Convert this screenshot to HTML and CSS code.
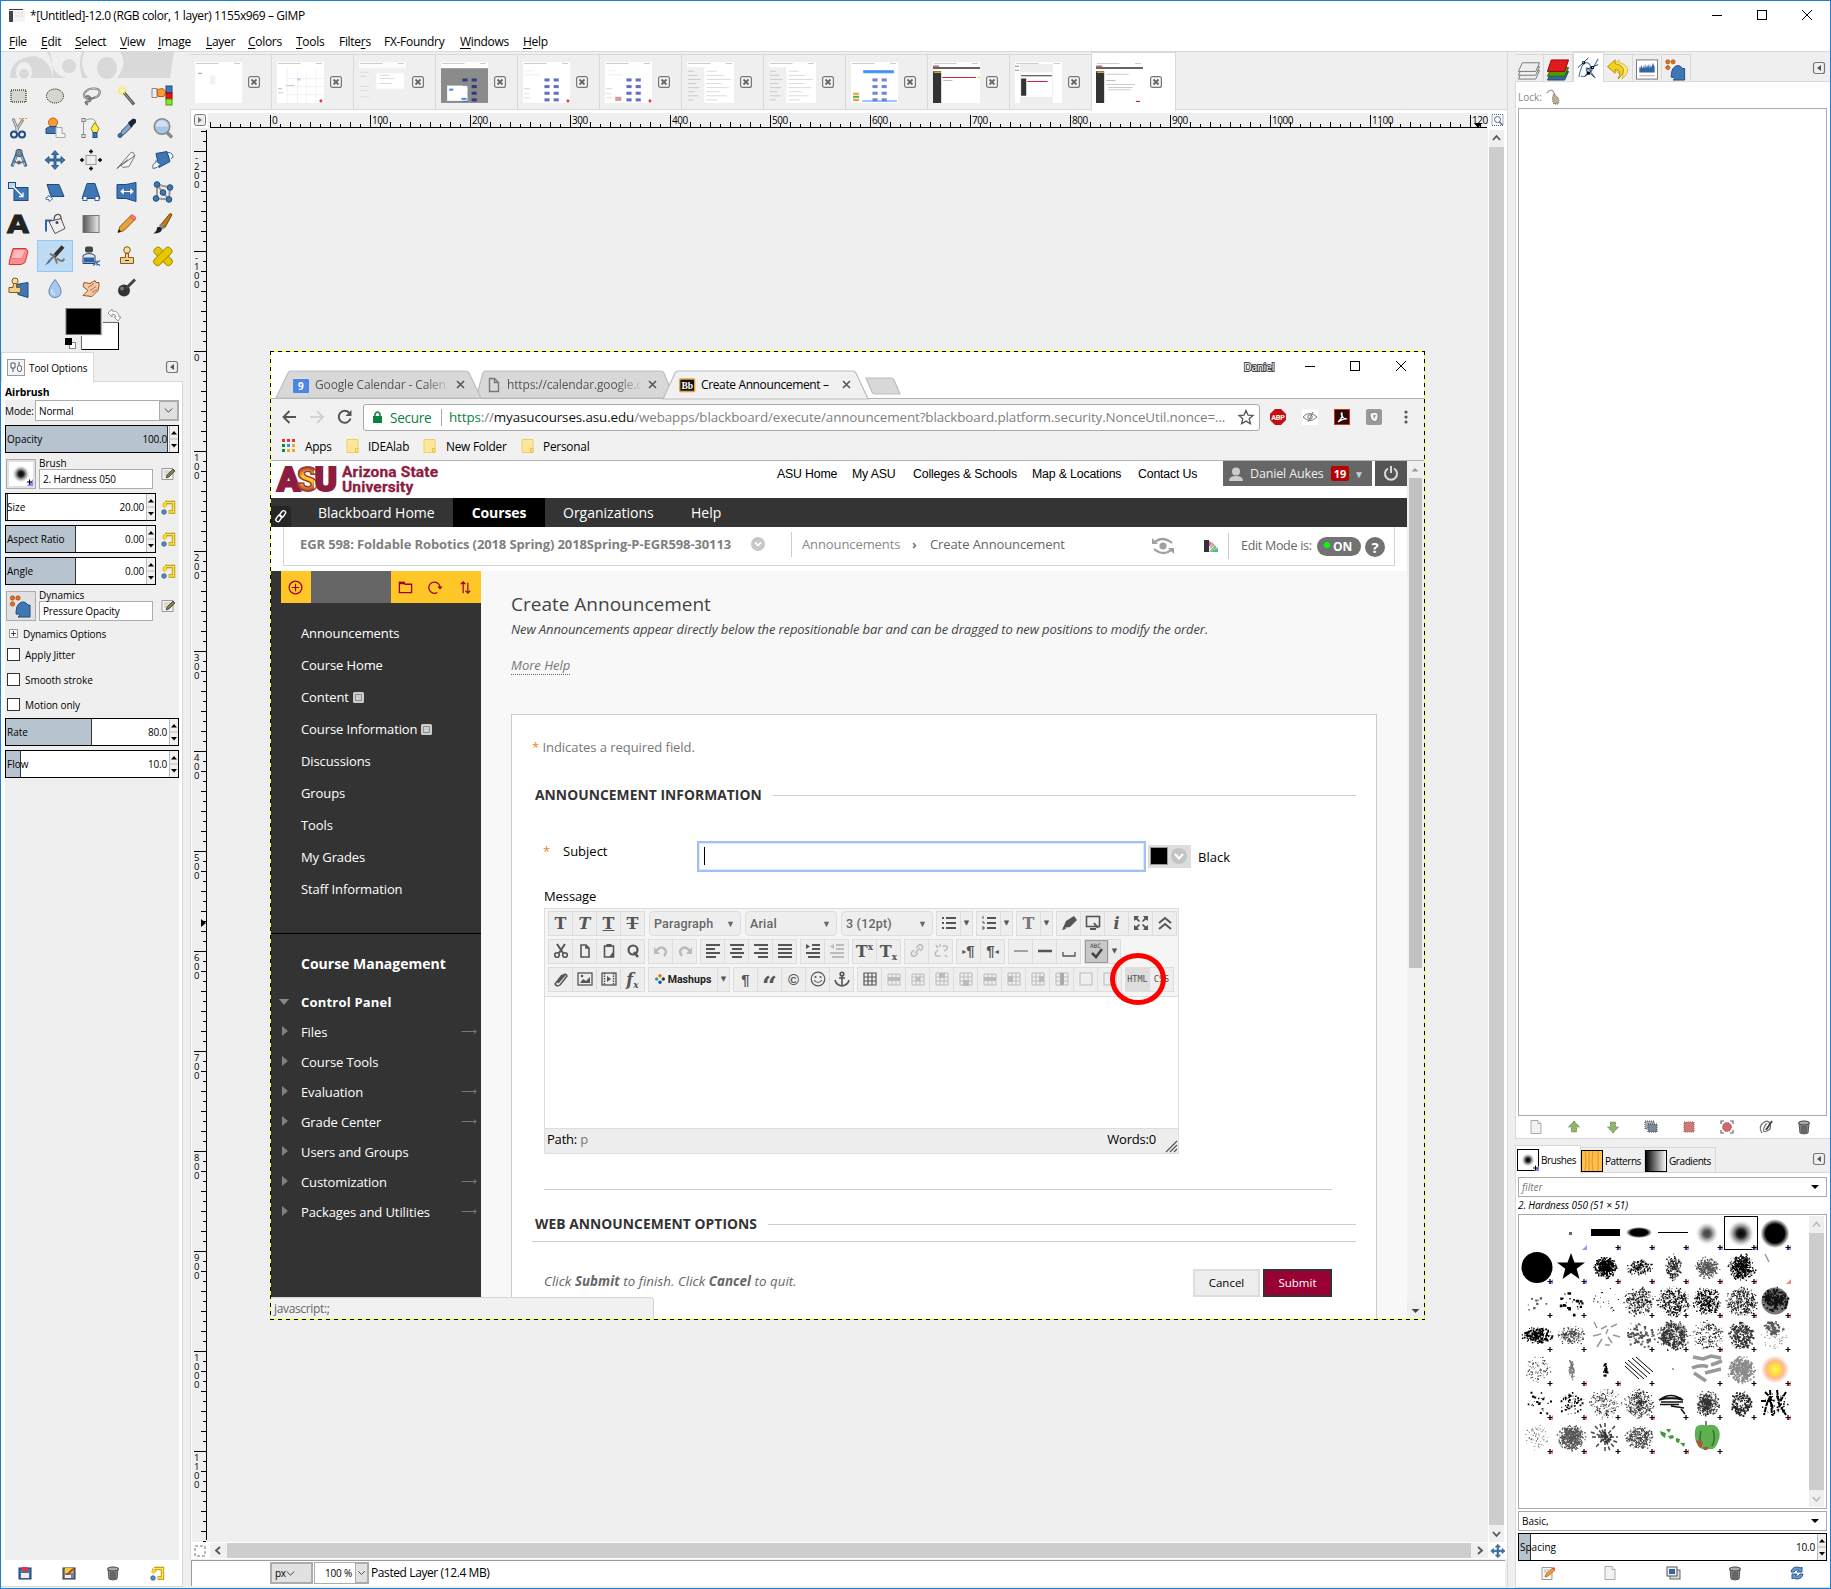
FILE: index.html
```html
<!DOCTYPE html>
<html lang="en">
<head>
<meta charset="utf-8">
<title>*[Untitled]-12.0 (RGB color, 1 layer) 1155x969 – GIMP</title>
<link rel="stylesheet" href="styles.css">
</head>
<body>
<div class="window">
  <header class="titlebar">
    <i data-icon="appthumb" class="app-icon"></i>
    <span class="title">*[Untitled]-12.0 (RGB color, 1 layer) 1155x969 – GIMP</span>
    <i data-icon="winbtns" class="win-buttons"></i>
  </header>
  <nav class="menubar">
    <span><u>F</u>ile</span><span><u>E</u>dit</span><span><u>S</u>elect</span><span><u>V</u>iew</span><span><u>I</u>mage</span><span><u>L</u>ayer</span><span><u>C</u>olors</span><span><u>T</u>ools</span><span>Filte<u>r</u>s</span><span>FX-Foundry</span><span><u>W</u>indows</span><span><u>H</u>elp</span>
  </nav>
  <div class="workspace">
    <aside class="toolbox">
      <i data-icon="wilber" class="wilber"></i>
      <div class="tools">
        <i data-icon="rectsel"></i><i data-icon="ellsel"></i><i data-icon="lasso"></i><i data-icon="wand"></i><i data-icon="bycolor"></i>
        <i data-icon="scissors"></i><i data-icon="foreground"></i><i data-icon="paths"></i><i data-icon="picker"></i><i data-icon="zoom"></i>
        <i data-icon="measure"></i><i data-icon="move"></i><i data-icon="align"></i><i data-icon="crop"></i><i data-icon="rotate"></i>
        <i data-icon="scale"></i><i data-icon="shear"></i><i data-icon="perspective"></i><i data-icon="flip"></i><i data-icon="cage"></i>
        <i data-icon="text"></i><i data-icon="bucket"></i><i data-icon="blend"></i><i data-icon="pencil"></i><i data-icon="brush"></i>
        <i data-icon="eraser"></i><i data-icon="airbrush" class="on"></i><i data-icon="ink"></i><i data-icon="stamp"></i><i data-icon="heal"></i>
        <i data-icon="pclone"></i><i data-icon="blur"></i><i data-icon="smudge"></i><i data-icon="dodge"></i>
      </div>
      <i data-icon="colors" class="colors"></i>
      <div class="opt-tabs"><div class="opt-tab"><i data-icon="toolopt" class="i18"></i><span>Tool Options</span></div><i data-icon="menubtn" class="i12"></i></div>
      <div class="opt-panel">
        <b class="tool-name">Airbrush</b>
        <div class="opt-body">
          <div class="mode"><span>Mode:</span><div class="combo"><span>Normal</span><i data-icon="chev" class="combo-arrow"></i></div></div>
          <div class="slider"><div class="fill" style="width:94%"></div><span>Opacity</span><b>100.0</b><i data-icon="spin" class="spin"></i></div>
          <div class="resource"><i data-icon="softbtn" class="res-btn"></i><div><span>Brush</span><div class="entry">2. Hardness 050</div></div><i data-icon="edit" class="i16"></i></div>
          <div class="reset-row"><div class="slider"><div class="fill" style="width:1.3%"></div><span>Size</span><b>20.00</b><i data-icon="spin" class="spin"></i></div><i data-icon="reset" class="i16"></i></div>
          <div class="reset-row"><div class="slider"><div class="fill" style="width:47%"></div><span>Aspect Ratio</span><b>0.00</b><i data-icon="spin" class="spin"></i></div><i data-icon="reset" class="i16"></i></div>
          <div class="reset-row"><div class="slider"><div class="fill" style="width:47%"></div><span>Angle</span><b>0.00</b><i data-icon="spin" class="spin"></i></div><i data-icon="reset" class="i16"></i></div>
          <div class="resource"><i data-icon="dynbtn" class="res-btn"></i><div><span>Dynamics</span><div class="entry">Pressure Opacity</div></div><i data-icon="edit" class="i16"></i></div>
          <div class="expander"><i data-icon="plusbox" class="i9"></i><span>Dynamics Options</span></div>
          <label class="check"><i></i>Apply Jitter</label>
          <label class="check"><i></i>Smooth stroke</label>
          <label class="check"><i></i>Motion only</label>
          <div class="slider"><div class="fill" style="width:50%"></div><span>Rate</span><b>80.0</b><i data-icon="spin" class="spin"></i></div>
          <div class="slider"><div class="fill" style="width:9%"></div><span>Flow</span><b>10.0</b><i data-icon="spin" class="spin"></i></div>
        </div>
        <div class="opt-foot"><i data-icon="save"></i><i data-icon="load"></i><i data-icon="trash"></i><i data-icon="reset"></i></div>
      </div>
    </aside>

    <main class="center">
      <div class="img-tabs" id="imgTabs"></div>
      <div class="img-view">
        <i data-icon="playbtn" class="corner"></i>
        <div class="hruler" id="hruler"></div>
        <i data-icon="zoomfit" class="corner"></i>
        <div class="vruler" id="vruler"></div>
        <div class="canvas">
          <div class="layer">
            <div class="strip">
              <i data-icon="tabshapes" class="tabshapes"></i>
              <i data-icon="gcal" class="i16"></i><span class="fade">Google Calendar - Calen</span><i data-icon="x" class="i9"></i>
              <i data-icon="page" class="i16"></i><span class="fade">https://calendar.google.c</span><i data-icon="x" class="i9"></i>
              <i data-icon="bb" class="i16"></i><span class="tab-title">Create Announcement –</span><i data-icon="x" class="i9"></i>
              <span class="profile">Daniel</span><i data-icon="chromebtns" class="chromebtns"></i>
            </div>
            <div class="chrome">
              <div class="addr">
                <i data-icon="back" class="i16"></i><i data-icon="fwd" class="i16"></i><i data-icon="reload" class="i16"></i>
                <div class="url"><i data-icon="lock" class="lock"></i><span class="secure">Secure</span><span class="address"><em>https</em>://<b>myasucourses.asu.edu</b>/webapps/blackboard/execute/announcement?blackboard.platform.security.NonceUtil.nonce=...</span><i data-icon="star" class="i16"></i></div>
                <i data-icon="abp" class="i16"></i><i data-icon="eye" class="i16"></i><i data-icon="pdf" class="i16"></i><i data-icon="shield" class="i16"></i><i data-icon="dots" class="i16"></i>
              </div>
              <div class="marks"><i data-icon="apps" class="i14"></i><span>Apps</span><i data-icon="folder" class="i14"></i><span>IDEAlab</span><i data-icon="folder" class="i14"></i><span>New Folder</span><i data-icon="folder" class="i14"></i><span>Personal</span></div>
            </div>
            <div class="site-wrap">
              <div class="site">
                <div class="asu">
                  <div class="logo"><span class="mark">A<em>S</em>U</span><span class="name">Arizona State<br>University</span></div>
                  <span>ASU Home</span><span>My ASU</span><span>Colleges &amp; Schools</span><span>Map &amp; Locations</span><span>Contact Us</span>
                  <div class="user"><i data-icon="person" class="i14"></i><span>Daniel Aukes</span><b>19</b><small>▼</small></div>
                  <div class="power"><i data-icon="power" class="i16"></i></div>
                </div>
                <div class="topnav"><div class="link"><i data-icon="link" class="i14"></i></div><span>Blackboard Home</span><b>Courses</b><span>Organizations</span><span>Help</span></div>
                <div class="crumbs">
                  <b>EGR 598: Foldable Robotics (2018 Spring) 2018Spring-P-EGR598-30113</b><i data-icon="down" class="i14"></i>
                  <span class="c1">Announcements</span><span class="sep">›</span><span class="c2">Create Announcement</span>
                  <i data-icon="preview" class="preview"></i><i data-icon="theme" class="i16"></i><span class="em">Edit Mode is:</span><span class="pill">ON</span><span class="help">?</span>
                </div>
                <div class="cols">
                  <div class="side">
                    <div class="side-head"><i data-icon="plus"></i><i data-icon="fold"></i><i data-icon="refresh"></i><i data-icon="updown"></i></div>
                    <ul class="course">
                      <li>Announcements</li><li>Course Home</li><li>Content <i data-icon="dotbox" class="i11"></i></li><li>Course Information <i data-icon="dotbox" class="i11"></i></li><li>Discussions</li><li>Groups</li><li>Tools</li><li>My Grades</li><li>Staff Information</li>
                    </ul>
                    <h3>Course Management</h3>
                    <h4>Control Panel</h4>
                    <ul class="control">
                      <li class="go">Files</li><li>Course Tools</li><li class="go">Evaluation</li><li class="go">Grade Center</li><li>Users and Groups</li><li class="go">Customization</li><li class="go">Packages and Utilities</li>
                    </ul>
                  </div>
                  <div class="content">
                    <h1>Create Announcement</h1>
                    <p class="intro">New Announcements appear directly below the repositionable bar and can be dragged to new positions to modify the order.</p>
                    <p class="more"><span>More Help</span></p>
                    <div class="card">
                      <p class="req"><em>*</em> Indicates a required field.</p>
                      <h2 class="h2">ANNOUNCEMENT INFORMATION</h2>
                      <div class="subject"><em>*</em><span>Subject</span><div class="field"></div><i data-icon="swatch" class="swatch"></i><span>Black</span></div>
                      <p class="msg">Message</p>
                      <div class="editor">
                        <div class="bars" id="bars"></div>
                        <div class="area"></div>
                        <div class="path"><span>Path: <em>p</em></span><span class="words">Words:0</span><i data-icon="grip" class="i14"></i></div>
                        <div class="ring"></div>
                      </div>
                      <div class="rule"></div>
                      <h2 class="h2 second">WEB ANNOUNCEMENT OPTIONS</h2>
                      <div class="rule2"></div>
                      <div class="actions"><p>Click <b>Submit</b> to finish. Click <b>Cancel</b> to quit.</p><span class="btn">Cancel</span><span class="btn primary">Submit</span></div>
                    </div>
                  </div>
                </div>
                <div class="statustip">javascript:;</div>
              </div>
              <div class="wsb"><i data-icon="sbup"></i><div class="thumb"></div><i data-icon="sbdown"></i></div>
            </div>
          </div>
        </div>
        <div class="vsb"><i data-icon="aup"></i><div class="thumb"></div><i data-icon="adown"></i></div>
        <i data-icon="quick" class="corner"></i>
        <div class="hsb"><i data-icon="aleft"></i><div class="thumb"></div><i data-icon="aright"></i></div>
        <i data-icon="nav" class="corner nav"></i>
      </div>
      <div class="status"><div class="unit">px<i data-icon="chev" class="i9"></i></div><div class="zoomlvl"><span>100 %</span><i data-icon="chev"></i></div><span>Pasted Layer (12.4 MB)</span></div>
    </main>

    <aside class="docks">
      <div class="dock-tabs">
        <i data-icon="layers"></i><i data-icon="channels"></i><i data-icon="pathsdock" class="on"></i><i data-icon="undodock"></i><i data-icon="histo"></i><i data-icon="dyn"></i><i data-icon="menubtn" class="dock-menu"></i>
      </div>
      <div class="dock paths-dock">
        <div class="lockrow"><span>Lock:</span><i data-icon="brushlock" class="i16"></i></div>
        <div class="list"></div>
        <div class="dock-btns"><i data-icon="newdoc"></i><i data-icon="gup"></i><i data-icon="gdown"></i><i data-icon="dup"></i><i data-icon="redbox"></i><i data-icon="redsel"></i><i data-icon="strokep"></i><i data-icon="trash"></i></div>
      </div>
      <div class="res-tabs"><div class="on"><i data-icon="tbrush"></i>Brushes</div><div><i data-icon="tpattern"></i>Patterns</div><div><i data-icon="tgradient"></i>Gradients</div><i data-icon="menubtn" class="dock-menu"></i></div>
      <div class="dock brushes-dock">
        <div class="drop"><em>filter</em><small></small></div>
        <div class="bname">2. Hardness 050 (51 × 51)</div>
        <div class="blist"><div class="bgrid" id="bgrid"></div><div class="bsb"><i data-icon="aupl"></i><div class="thumb"></div><i data-icon="adownl"></i></div></div>
        <div class="drop">Basic,<small></small></div>
        <div class="slider"><div class="fill" style="width:3.8%"></div><span>Spacing</span><b>10.0</b><i data-icon="spin" class="spin"></i></div>
        <div class="dock-btns five"><i data-icon="editc"></i><i data-icon="newdoc"></i><i data-icon="dupc"></i><i data-icon="trash"></i><i data-icon="sync"></i></div>
      </div>
    </aside>
  </div>
</div>
<script src="app.js"></script>
</body>
</html>
```
FILE: styles.css
```css
* { box-sizing: border-box; }
html, body { margin: 0; padding: 0; }
body { width: 1831px; height: 1589px; overflow: hidden; font-family: "Open Sans", "Noto Sans", sans-serif; font-size: 10px; color: #000; background: #fff; }
i { font-style: normal; display: block; flex: none; }
svg { display: block; width: 100%; height: 100%; overflow: visible; }
ul, h1, h2, h3, h4, p { margin: 0; padding: 0; list-style: none; font-weight: normal; }
.i9 { width: 9px; height: 9px; } .i11 { width: 11px; height: 11px; } .i12 { width: 12px; height: 12px; }
.i14 { width: 14px; height: 14px; } .i16 { width: 16px; height: 16px; } .i18 { width: 18px; height: 20px; }

.window { width: 1831px; height: 1589px; border: 1px solid #1c7fd4; display: flex; flex-direction: column; background: #fff; }
.titlebar { height: 30px; display: flex; align-items: center; padding: 0 0 2px 8px; font-size: 12px; letter-spacing: -.39px; }
.app-icon { width: 16px; height: 14px; margin-right: 5px; }
.title { flex: 1; white-space: nowrap; }
.win-buttons { width: 102px; height: 12px; margin-right: 17px; }
.menubar { height: 21px; border-bottom: 1px solid #d9d9d9; padding-left: 8px; display: grid; grid-template-columns: 32px 34px 45px 38px 48px 42px 48px 43px 45px 76px 63px 50px; align-items: center; font-size: 12px; letter-spacing: -.3px; white-space: nowrap; }
.menubar u { text-underline-offset: 2px; }
.workspace { flex: 1; display: grid; grid-template-columns: 189px 1318px 322px; background: #efefef; min-height: 0; }

/* toolbox */
.toolbox { display: flex; flex-direction: column; }
.wilber { width: 164px; height: 26px; margin: 0 0 2px 9px; }
.tools { display: grid; grid-template-columns: repeat(5, 36px); grid-auto-rows: 32px; }
.tools > i { border: 1px solid transparent; padding: 3px 5px 2px 5px; }
.tools > .on { background: #c0dcf3; border-color: #90c8f6; }
.colors { width: 60px; height: 48px; margin-left: 62px; }
.opt-tabs { height: 30px; display: flex; justify-content: space-between; padding-right: 12px; margin-bottom: -1px; }
.opt-tabs > .i12 { margin-top: 9px; }
.opt-tab { width: 93px; height: 30px; background: #fff; border: 1px solid #d9d9d9; border-width: 1px 1px 0; display: flex; align-items: center; gap: 4px; padding-left: 5px; white-space: nowrap; position: relative; letter-spacing: -.1px; }
.opt-panel { flex: 1; width: 182px; background: #fff; border: 1px solid #d9d9d9; border-left: 0; padding: 3px 3px 0 4px; display: flex; flex-direction: column; margin-bottom: 1px; }
.tool-name { height: 15px; line-height: 15px; font-size: 10.4px; letter-spacing: -.1px; }
.opt-body { flex: 1; background: #efefef; width: 174px; }
.mode { display: flex; height: 21px; align-items: center; letter-spacing: -.1px; }
.mode > span { width: 30px; }
.combo { flex: 1; height: 21px; border: 1px solid #acacb0; background: #fff; display: flex; align-items: center; justify-content: space-between; padding-left: 3px; }
.combo-arrow { width: 19px; height: 19px; background: #e1e1e1; border: 1px solid #acacb0; padding: 4px; }
.slider { height: 28px; border: 1px solid #000; background: #fff; position: relative; display: flex; align-items: center; padding-left: 1px; margin-top: 4px; }
.slider .fill { position: absolute; left: 0; top: 0; bottom: 0; background: #b7c3ce; border-right: 1px solid #333; }
.slider span { position: relative; flex: 1; }
.slider b { font-weight: normal; position: relative; margin-right: 2px; letter-spacing: -.2px; }
.spin { width: 9px; height: 26px; background: #efefef; position: relative; }
.resource { height: 31px; margin: 5px 0 4px 1px; display: flex; align-items: center; }
.resource > div { width: 114px; margin: 0 7px 0 3px; }
.resource span { display: block; height: 11px; line-height: 11px; }
.res-btn { width: 30px; height: 30px; border: 1px solid #acacb0; background: #e1e1e1; padding: 2px; }
.entry { height: 20px; border: 1px solid #acacb0; background: #fff; line-height: 19px; padding-left: 3px; letter-spacing: -.15px; white-space: nowrap; }
.reset-row { display: flex; align-items: center; height: 28px; margin-bottom: 4px; }
.reset-row .slider { width: 151px; margin: 0 4px 0 0; }
.expander { display: flex; align-items: center; height: 17px; gap: 5px; padding-left: 4px; margin: 3px 0 0; letter-spacing: -.1px; }
.check { display: flex; align-items: center; height: 25px; gap: 5px; padding-left: 2px; letter-spacing: -.05px; }
.check i { width: 13px; height: 13px; border: 1px solid #333; background: #fff; }
.check + .slider { margin-top: 1px; }
.opt-foot { height: 26px; display: flex; align-items: center; padding-left: 12px; gap: 28px; }
.opt-foot i { width: 16px; height: 16px; }

/* image window */
.center { border-right: 1px solid #d9d9d9; display: flex; flex-direction: column; }
.img-tabs { height: 58px; display: flex; align-items: flex-start; padding-top: 2px; border-bottom: 1px solid #d9d9d9; }
.img-tab { width: 82px; height: 55px; border-top: 1px solid #d9d9d9; border-right: 1px solid #d9d9d9; display: flex; align-items: center; padding-left: 5px; gap: 6px; }
.img-tab .th { width: 47px; height: 41px; }
.img-tab .cl { width: 12px; height: 12px; }
.img-tab.on { width: 85px; height: 59px; margin: -2px 0 -2px -1px; background: #fff; border-left: 1px solid #d9d9d9; position: relative; padding-left: 4px; gap: 7px; }
.img-view { height: 1449px; display: grid; grid-template-columns: 17px 1280px 17px; grid-template-rows: 18px 1414px 17px; background: #fff; border-left: 1px solid #d9d9d9; }
.corner { padding: 4px 0 1px 3px; }
.corner.nav { padding: 1px 0 0 2px; }
.hruler { background: #efefef; margin-top: 3px; }
.vruler { background: #efefef; overflow: hidden; margin-left: 1px; padding-top: 2px; }
.canvas { background: #efefef; position: relative; overflow: hidden; }
.vsb { display: flex; flex-direction: column; padding: 2px 1px 0; background: #fff; }
.vsb i, .wsb i, .bsb i { height: 17px; background: #efefef; width: 15px; }
.vsb .thumb { flex: 1; background: #cdcdcd; }
.hsb { display: flex; padding: 1px 0; margin-left: 2px; }
.hsb i { width: 17px; background: #efefef; height: 15px; }
.hsb .thumb { flex: 1; background: #cdcdcd; }
.status { flex: 1; border-top: 1px solid #9a9a9a; border-left: 1px solid #9a9a9a; background: #fff; margin: 1px 2px 2px 1px; display: flex; align-items: flex-start; padding: 1px 0 0 78px; font-size: 12px; letter-spacing: -.4px; line-height: 22px; }
.unit { width: 43px; height: 22px; border: 2px solid #acacb0; background: #e1e1e1; display: flex; align-items: center; font-size: 10px; padding-left: 3px; margin-right: 1px; }
.zoomlvl { width: 55px; height: 22px; border: 1px solid #acacb0; display: flex; font-size: 10px; margin-right: 2px; line-height: 21px; }
.zoomlvl span { flex: 1; text-align: right; padding-right: 3px; letter-spacing: -.2px; }
.zoomlvl i { width: 13px; background: #e1e1e1; border: 1px solid #acacb0; padding: 5px 1px; }

/* pasted layer */
.layer { position: absolute; left: 62px; top: 223px; width: 1155px; height: 969px; background: #fff; overflow: hidden; display: flex; flex-direction: column; }
.layer::after { content: ""; position: absolute; inset: 0; background:
  repeating-linear-gradient(90deg, #000 0 4px, #ff0 4px 8px) 0 0 / 100% 1px no-repeat,
  repeating-linear-gradient(90deg, #000 0 4px, #ff0 4px 8px) 0 100% / 100% 1px no-repeat,
  repeating-linear-gradient(#000 0 4px, #ff0 4px 8px) 0 0 / 1px 100% no-repeat,
  repeating-linear-gradient(#000 0 4px, #ff0 4px 8px) 100% 0 / 1px 100% no-repeat; }
.strip { height: 47px; position: relative; display: grid; grid-template-columns: 22px 141px 30px 21px 141px 31px 22px 141px 401px 62px 110px; padding: 20px 0 0 23px; align-items: center; justify-items: start; font-size: 12px; letter-spacing: -.15px; white-space: nowrap; }
.strip > * { position: relative; }
.strip > .tabshapes { position: absolute; left: 0; top: 0; width: 1155px; height: 47px; }
.fade { color: #555; -webkit-mask: linear-gradient(90deg, #000 110px, transparent 136px); mask: linear-gradient(90deg, #000 110px, transparent 136px); }
.tab-title { letter-spacing: -.37px; }
.strip .profile { top: -18px; font-size: 10.5px; color: #fff; -webkit-text-stroke: 2px #444; paint-order: stroke fill; left: 1px; }
.chromebtns { width: 102px; height: 11px; top: -18px; }
.chrome { height: 63px; background: #f1f1f1; border-top: 1px solid #b4b4b4; border-bottom: 1px solid #b4b4b4; }
.addr { height: 36px; display: grid; grid-template-columns: 28px 28px 26px 907px 32px 32px 32px 32px 20px; padding-left: 11px; align-items: center; }
.url { width: 897px; height: 27px; background: #fff; border: 1px solid #a9a9a9; border-radius: 3px; display: grid; grid-template-columns: 17px 59px 789px 20px; padding-left: 9px; align-items: center; font-size: 13.6px; color: #808080; white-space: nowrap; }
.lock { width: 9px; height: 12px; }
.secure { color: #0b8043; letter-spacing: -.3px; border-right: 1px solid #aaa; width: 52px; line-height: 17px; }
.address { font-size: 13.4px; letter-spacing: -.11px; }
.address em { font-style: normal; color: #0b8043; } .address b { font-weight: normal; color: #111; }
.marks { height: 21px; padding-left: 12px; display: grid; grid-template-columns: 23px 41px 22px 55px 23px 75px 22px 80px; align-items: center; font-size: 11.8px; letter-spacing: -.2px; white-space: nowrap; }
.site-wrap { flex: 1; display: flex; min-height: 0; }
.site { width: 1137px; display: flex; flex-direction: column; position: relative; font-size: 13px; }
.wsb { width: 18px; background: #f1f1f1; display: flex; flex-direction: column; }
.wsb .thumb { height: 490px; width: 13px; margin: 0 0 334px 2px; background: #c1c1c1; }
.asu { height: 37px; display: grid; grid-template-columns: 506px 75px 61px 119px 106px 85px 152px 32px; font-family: "Liberation Sans", Arial, sans-serif; font-size: 12.3px; line-height: 26px; letter-spacing: -.15px; white-space: nowrap; padding-left: 1px; align-items: start; }
.logo { color: #8c1d40; display: flex; padding: 2px 0 0 6px; font-weight: bold; }
.mark { width: 65px; font: 900 34px/33px "Roboto", sans-serif; letter-spacing: -3.5px; -webkit-text-stroke: 2px #8c1d40; }
.mark em { font-style: normal; background: radial-gradient(circle at 60% 50%, #ffc627 25%, #8c1d40 60%); -webkit-background-clip: text; background-clip: text; color: transparent; -webkit-text-stroke: 1.4px #a53a35; }
.name { font: bold 15.5px/15px "Roboto", "Open Sans", sans-serif; letter-spacing: .15px; padding-top: 2px; -webkit-text-stroke: .3px #8c1d40; }
.user { width: 149px; height: 25px; background: #666; color: #eee; display: grid; grid-template-columns: 21px 81px 19px 20px; align-items: center; padding-left: 6px; font: 12.5px "Open Sans", sans-serif; }
.user b { background: #b80000; color: #fff; font-size: 11px; width: 18px; height: 15px; line-height: 15px; text-align: center; border-radius: 2px; }
.user small { font-size: 10px; color: #ccc; padding-left: 4px; }
.power { width: 32px; height: 25px; background: #555; padding: 4px 8px; }
.topnav { height: 29px; background: #343434; color: #fff; display: flex; align-items: center; font-size: 14px; white-space: nowrap; }
.topnav .link { width: 20px; height: 21px; background: #262626; align-self: flex-end; border-radius: 0 4px 0 0; padding: 3px; margin: 0 27px 0 1px; }
.topnav span:nth-of-type(1) { width: 135px; }
.topnav b { background: #000; width: 92px; height: 29px; line-height: 29px; text-align: center; margin-right: 18px; letter-spacing: -.1px; }
.topnav span:nth-of-type(2) { width: 128px; }
.crumbs { height: 39px; margin: 0 12px 5px 13px; border: 1px solid #d5d5d5; border-top: 0; display: grid; grid-template-columns: 451px 51px 110px 18px 221px 57px 32px 77px 48px 21px; padding: 0 0 5px 16px; align-items: center; color: #888; white-space: nowrap; font-size: 13px; letter-spacing: -.1px; }
.crumbs b { color: #808080; letter-spacing: -.11px; font-size: 13px; }
.crumbs .c1 { position: relative; }
.crumbs .c1::before { content: ""; position: absolute; left: -11px; top: -3px; height: 25px; border-left: 1px solid #ccc; }
.crumbs .sep { font-weight: bold; color: #777; }
.crumbs .c2, .crumbs .em { color: #666; } .crumbs .em { border-left: 1px solid #ccc; padding-left: 12px; margin-left: -12px; line-height: 26px; margin-top: 5px; font-size: 12.5px; letter-spacing: -.3px; width: 86px; }
.preview { width: 24px; height: 18px; margin-top: 4px; } .crumbs .i16 { margin-top: 4px; margin-left: -7px; }
.pill { background: #727272; color: #fff; font-weight: bold; font-size: 12px; border-radius: 10px; height: 19px; line-height: 19px; width: 44px; padding-left: 16px; position: relative; margin-top: 5px; }
.pill::before { content: ""; position: absolute; left: 7px; top: 5px; width: 6px; height: 6px; border-radius: 3px; background: #0f0; }
.help { background: #727272; color: #fff; font-weight: bold; width: 20px; height: 20px; line-height: 20px; text-align: center; border-radius: 10px; margin-top: 6px; font-size: 15px; }
.cols { flex: 1; display: flex; min-height: 0; }
.side { width: 211px; background: #333; color: #fff; padding-left: 1px; font-size: 13px; letter-spacing: -.1px; }
.side-head { height: 32px; margin-left: 10px; background: linear-gradient(90deg, #ffc627 30px, #666 30px 110px, #ffc627 110px); display: grid; grid-template-columns: 110px 29px 31px 27px; align-items: center; }
.side-head i { width: 15px; height: 15px; margin-left: 7px; }
.course { padding: 14px 0 28px 30px; border-bottom: 1px solid #000; }
.course li { height: 32px; display: flex; align-items: center; gap: 4px; }
.side h3 { font-weight: bold; font-size: 14px; letter-spacing: 0; height: 30px; line-height: 30px; margin: 15px 0 0 30px; }
.side h4 { font-weight: bold; height: 30px; line-height: 30px; margin-top: 8px; padding-left: 30px; position: relative; letter-spacing: .2px; }
.side h4::before { content: ""; position: absolute; left: 8px; top: 12px; border: 5.5px solid transparent; border-top: 6px solid #888; border-bottom: 0; }
.control li { height: 30px; line-height: 30px; padding-left: 30px; display: flex; position: relative; }
.control li::before { content: ""; position: absolute; left: 11px; top: 9px; border: 5.5px solid transparent; border-left: 6px solid #808080; border-right: 0; }
.control .go::after { content: "⟶"; color: #777; margin-left: auto; font: 11px/30px "DejaVu Sans", sans-serif; padding-right: 4px; }
.content { flex: 1; background: #f8f8f8; padding: 18px 0 0 30px; color: #444; }
.content h1 { font-size: 19px; height: 30px; line-height: 30px; }
.intro { font-style: italic; height: 20px; line-height: 20px; white-space: nowrap; letter-spacing: -.115px; color: #444; }
.more { font-style: italic; margin-top: 16px; height: 20px; line-height: 20px; color: #777; } .more span { border-bottom: 1px dotted #666; }
.card { margin-top: 39px; width: 866px; height: 700px; border: 1px solid #ccc; background: #fff; }
.req { margin: 22px 0 0 20px; height: 20px; line-height: 20px; color: #777; letter-spacing: -.05px; }
.req em, .subject em { font-style: normal; color: #f58220; }
.h2 { margin: 27px 20px 1px 23px; height: 20px; font-size: 13.8px; color: #333; display: flex; align-items: center; gap: 11px; white-space: nowrap; font-weight: 700; letter-spacing: .06px; }
.h2::after { content: ""; flex: 1; border-top: 1px solid #ccc; margin-top: 2px; }
.subject { margin: 37px 0 0 31px; height: 31px; display: grid; grid-template-columns: 20px 134px 451px 50px 60px; color: #000; align-items: center; }
.subject > em, .subject > em + span { margin-top: -12px; }
.field { width: 449px; height: 31px; border: 2px solid #9fc1f7; box-shadow: inset 0 0 0 1px #e2e8f0; background: #fff; position: relative; }
.field::after { content: ""; position: absolute; left: 5px; top: 4px; height: 18px; border-left: 1px solid #000; }
.swatch { width: 43px; height: 23px; }
.msg { margin: 14px 0 0 32px; height: 20px; line-height: 20px; color: #000; letter-spacing: -.1px; }
.editor { margin: 2px 0 0 32px; width: 635px; height: 246px; border: 1px solid #ddd; display: flex; flex-direction: column; position: relative; }
.bars { height: 88px; background: #f5f5f5; border-bottom: 1px solid #ddd; padding: 2px 0 0 3px; }
.bar { display: flex; gap: 3px; height: 25px; margin-bottom: 3px; }
.grp { display: flex; border: 1px solid #ddd; background: #eee; }
.grp > i { width: 24px; border-right: 1px solid #ddd; display: flex; align-items: center; justify-content: center; font: bold 16px/21px "DejaVu Serif", serif; color: #555; padding-bottom: 1px; }
.grp > i:last-child { border-right: 0; width: 23px; }
.grp > i svg { width: 16px; height: 16px; }
.grp sup, .grp sub { font-size: 9px; line-height: 0; } .grp sup { vertical-align: 7px; } .grp sub { vertical-align: -3px; }
.grp .sans { font: bold 15px "Liberation Sans", sans-serif; } .grp .tiny { font-size: 8px; vertical-align: 2px; }
.grp .quote { font: bold 26px/10px "DejaVu Serif", serif; padding-top: 14px; }
.grp > i.lt { color: #777; }
.grp > i.n { width: 12px; font: 7px "DejaVu Sans", sans-serif; } .grp > i.n:last-child { width: 11px; }
.grp > i.m { width: 69px; font: bold 10.6px "Roboto", sans-serif; color: #222; gap: 3px; } .grp > i.m svg { width: 10px; height: 10px; }
.grp > i.h { font: 8.5px "DejaVu Sans Mono", monospace; letter-spacing: 0; color: #555; } .grp > i.h:first-child { background: #ddd; }
.grp > i.k { background: #c8c8c8; box-shadow: inset 0 0 0 1px #999; }
.sel { width: 92px; border: 1px solid #ddd; border-radius: 4px; background: #eee; display: flex; justify-content: space-between; align-items: center; padding: 0 5px 0 4px; font: 500 12.5px "Roboto", sans-serif; letter-spacing: .2px; color: #666; margin: 0 0 0 1px; }
.sel small { font-size: 9px; }
.area { flex: 1; background: #fff; }
.path { height: 25px; background: #ededed; border-top: 1px solid #ddd; display: flex; padding-left: 2px; color: #000; line-height: 21px; letter-spacing: -.2px; }
.path em { font-style: normal; color: #777; } .words { margin-left: auto; margin-right: 8px; } .path .i14 { margin: 9px 0 0; }
.ring { position: absolute; left: 565px; top: 44px; width: 56px; height: 52px; border: 5px solid #f00; border-radius: 50%; }
.rule { margin: 35px 44px 0 32px; border-top: 1px solid #ccc; }
.second { margin-top: 23px; }
.rule2 { margin: 8px 20px 0; border-top: 1px solid #ccc; }
.actions { margin: 27px 44px 0 32px; height: 28px; display: flex; gap: 3px; color: #666; font-style: italic; }
.actions p { flex: 1; line-height: 24px; font-size: 13.3px; letter-spacing: .06px; }
.btn { width: 67px; height: 28px; line-height: 24px; border: 2px solid #ddd; background: #eee; color: #000; text-align: center; font-size: 11.5px; font-style: normal; }
.btn.primary { width: 69px; background: #903; border-color: #333; color: #fff; }
.statustip { position: absolute; left: 1px; bottom: 0; width: 383px; height: 23px; background: #f1f1f1; border: 1px solid #d5d5d5; border-left: 0; border-radius: 0 4px 0 0; font-size: 12px; line-height: 22px; color: #666; padding-left: 3px; letter-spacing: -.35px; }

/* rulers */
.hruler svg, .vruler svg { font-family: "Open Sans", sans-serif; }

/* right docks */
.docks { padding-left: 7px; display: flex; flex-direction: column; }
.dock-tabs { height: 30px; display: flex; padding-top: 2px; margin-bottom: -1px; }
.dock-tabs > i { width: 29px; height: 28px; border-top: 1px solid #d9d9d9; border-right: 1px solid #d9d9d9; padding: 3px 2px 1px 2px; }
.dock-tabs > .on { background: #fff; margin-top: -2px; height: 30px; border-left: 1px solid #d9d9d9; width: 31px; padding: 3px; position: relative; }
.dock-tabs > .dock-menu, .res-tabs > .dock-menu { width: 12px; height: 12px; margin: 8px 5px 0 auto; border: 0; padding: 0; }
.dock { background: #fff; border: 1px solid #d9d9d9; border-right: 0; padding: 0 3px 0 2px; }
.paths-dock { height: 1058px; display: flex; flex-direction: column; }
.lockrow { height: 26px; display: flex; align-items: center; color: #888; gap: 4px; padding-top: 3px; }
.list { flex: 1; border: 1px solid #a8a8ad; }
.dock-btns { height: 22px; display: flex; align-items: center; justify-content: space-between; padding: 0 15px 0 10px; }
.dock-btns i { width: 16px; height: 16px; }
.res-tabs { height: 28px; margin-top: 6px; display: flex; align-items: flex-end; margin-bottom: -1px; }
.res-tabs > div { height: 26px; border: 1px solid #d9d9d9; border-left: 0; border-bottom: 0; display: flex; align-items: center; gap: 2px; width: 64px; letter-spacing: -.42px; white-space: nowrap; }
.res-tabs > div:nth-child(3) { width: 71px; }
.res-tabs > div.on { background: #fff; height: 28px; width: 66px; position: relative; border-left: 1px solid #d9d9d9; padding-left: 1px; }
.res-tabs > div i { width: 22px; height: 22px; }
.res-tabs > .dock-menu { align-self: flex-start; }
.brushes-dock { height: 416px; }
.drop { height: 20px; border: 1px solid #a8a8ad; margin-top: 4px; padding: 0 7px 0 3px; display: flex; align-items: center; justify-content: space-between; color: #000; }
.drop em { color: #777; } .drop small { border: 4px solid transparent; border-top-color: #000; border-bottom: 0; }
.bname { font-style: italic; height: 17px; line-height: 17px; letter-spacing: -.1px; }
.blist { height: 295px; border: 1px solid #a8a8ad; display: flex; justify-content: space-between; padding: 1px; }
.bgrid { display: grid; grid-template-columns: repeat(8, 34px); grid-auto-rows: 34px; }
.bgrid .on { box-shadow: inset 0 0 0 1px #000; }
.bsb { width: 15px; margin-right: 1px; display: flex; flex-direction: column; }
.bsb .thumb { flex: 1; background: #cdcdcd; }
.blist + .drop { margin-top: 2px; }
.brushes-dock .slider { margin-top: 2px; }
.five { height: 24px; padding: 0 22px; }
```
FILE: app.js
```js
// Icon drawings, keyed by name: [viewBox, markup]
const B = 'fill="#3f77b5" stroke="#1f4a80"';
const G = 'fill="none" stroke="#555" stroke-width="1.6"';
const t24 = {
  rectsel: '<rect x="4" y="5.500" width="15" height="12" fill="#d3d7cf" stroke="#000" stroke-dasharray="1 1"/>',
  ellsel: '<ellipse cx="12" cy="11.500" rx="8.500" ry="7" fill="#d3d7cf" stroke="#000" stroke-dasharray="1 1"/>',
  lasso: '<path d="M8 14C1 11 7 4 15 4c8 0 7 7 1 9-4 1.500-9 2-9 0s3-2 4 0 1 4-2 4-3 2 0 3" fill="none" stroke="#777" stroke-width="2.200"/><path d="M8 14C1 11 7 4 15 4c8 0 7 7 1 9" fill="none" stroke="#ddd" stroke-width=".7"/>',
  wand: '<path d="M9 8l10 12" stroke="#555" stroke-width="3"/><path d="M10 9l8 10" stroke="#aaa" stroke-width="1"/><path d="M7 1v10M2 6h10M4 3l6 6M10 3l-6 6" stroke="#fce94f" stroke-width="1.300"/><circle cx="7" cy="6" r="2" fill="#fffbd0"/>',
  bycolor: '<path d="M1 4h5v9H1z" fill="#eee" stroke="#888"/><path d="M6 5l6-1 3 3-2 5-6 0z" fill="#f79a3c" stroke="#ce5c00"/><rect x="15" y="1.500" width="6" height="7" '+B+'/><rect x="15" y="8.500" width="6" height="6" fill="#e11" stroke="#900"/><rect x="15" y="14.500" width="6" height="6" fill="#8ae234" stroke="#4e9a06"/>',
  scissors: '<path d="M6 2l5 12M16 3L9 14" stroke="#888" stroke-width="3"/><path d="M6.500 3l4.500 11M15.500 4L9 14" stroke="#ddd"/><circle cx="7" cy="18" r="3" fill="none" stroke="#204a87" stroke-width="2"/><circle cx="15" cy="18" r="3" fill="none" stroke="#204a87" stroke-width="2"/><path d="M12 2h9" stroke="#e90" stroke-dasharray="2 1"/>',
  foreground: '<circle cx="10" cy="6" r="4.500" fill="#f79a3c" stroke="#ce5c00"/><path d="M3 17v-5l4-2h6l4 3v4z" '+B+'/><path d="M13 11h6v6h3v4h-9z" fill="#f4f4f4" stroke="#aaa"/>',
  paths: '<rect x="3" y="2" width="3" height="3" fill="#fff" stroke="#777"/><rect x="3" y="18" width="3" height="3" fill="#fff" stroke="#777"/><path d="M4.500 5v13M6 4c6-3 10-2 11 3" stroke="#999" fill="none"/><path d="M16 6l4 6-2 4h-4l-2-4z" fill="#fce94f" stroke="#a08000"/><rect x="14" y="16" width="4" height="5" '+B+'/>',
  picker: '<path d="M4 20l3-6 7-7 3 3-8 8z" fill="#7fa8d6" stroke="#345"/><path d="M13 6l5-4 3 1 0 3-5 5z" fill="#223"/><circle cx="5" cy="19" r="2" '+B+'/>',
  zoom: '<path d="M16 16l5 5" stroke="#888" stroke-width="3.500"/><circle cx="11" cy="10" r="7.800" fill="#a9c5e6" stroke="#888" stroke-width="1.500"/><path d="M5 10a6 6 0 0112 0z" fill="#d3e2f3"/>',
  measure: '<path d="M10 5L5 18M14 5l5 13" stroke="#3f6a9a" stroke-width="3.200"/><path d="M10 6L6 17M14 6l4 11" stroke="#b9d0ea"/><path d="M6 12q6 5 12 0" stroke="#666" fill="none" stroke-width="1.600"/><rect x="9" y="1" width="6" height="7" rx="2" fill="#789" stroke="#456"/><circle cx="12" cy="14" r="2" fill="#667"/>',
  move: '<path d="M12 2l3.500 4H13v4.500h5V8l4 3.500-4 3.500v-2.500h-5V17h2.500L12 21l-3.500-4H11v-4.500H6V15l-4-3.500L6 8v2.500h5V6H8.500z" '+B+' stroke-width=".8"/>',
  align: '<rect x="7" y="7" width="10" height="9" fill="#eee" stroke="#999"/><path d="M12 1v4M10 3h4M12 18v4M10 20h4M1 11.500h4M3 9.500v4M19 11.500h4M21 9.500v4" stroke="#000" stroke-width="1.400"/>',
  crop: '<path d="M2 20L16 4q4-1 3 4M6 17l14-10-6 11-6 1z" fill="#f4f4f4" stroke="#777"/><path d="M2 20l11-9" stroke="#666"/>',
  rotate: '<path d="M5 5l11-2 3 10-11 6z" '+B+'/><path d="M17 4q5 0 5 5l-2 1M2 20q-1-5 3-6v-2l4 4-3 3z" fill="#fff" stroke="#3465a4"/>',
  scale: '<rect x="7" y="7" width="14" height="13" '+B+'/><rect x="1.500" y="2" width="7" height="6" fill="#bcd4ef" stroke="#1f4a80"/><path d="M6 6l10 10m0-4v4h-4" stroke="#fff" fill="none" stroke-width="1.300"/>',
  shear: '<path d="M4 4h12l5 12H8z" '+B+'/><path d="M5 15l5 3-4 3v-2H3v-2h2z" fill="#fff" stroke="#3465a4" stroke-width=".8"/>',
  perspective: '<path d="M8 3h8l5 15H3z" '+B+'/><rect x="4" y="16" width="4" height="4" fill="#fff" stroke="#3465a4"/><rect x="16" y="16" width="4" height="4" fill="#fff" stroke="#3465a4"/>',
  flip: '<path d="M2 4h9l10-2v19l-10-3H2z" '+B+'/><path d="M5 11l4-4v3h6V7l4 4-4 4v-3H9v3z" fill="#fff" stroke="#1f4a80" stroke-width=".6"/>',
  cage: '<path d="M6 4l13 3-1 12-12-1zM6 4l6 8 6 7" fill="none" stroke="#999" stroke-width="2"/><g '+B+'><circle cx="6" cy="4" r="2.800"/><circle cx="19" cy="7" r="2.800"/><circle cx="18" cy="19" r="2.800"/><circle cx="5" cy="18" r="2.800"/><circle cx="12" cy="12" r="2.800"/></g>',
  text: '<text x="0" y="20.500" font-family="DejaVu Sans" font-weight="bold" font-size="25" textLength="22" lengthAdjust="spacingAndGlyphs" fill="#222" stroke="#222">A</text>',
  bucket: '<path d="M3 19V8h6" stroke="#3465a4" fill="none" stroke-width="2"/><path d="M6 9l12-3 4 10-10 5z" fill="#eee" stroke="#555"/><path d="M11 8c0-8 8-8 7-1" fill="none" stroke="#555" stroke-width="1.300"/><circle cx="14" cy="10" r="1.500" fill="#444"/>',
  blend: '<defs><linearGradient id="lg"><stop stop-color="#555"/><stop offset="1" stop-color="#eee"/></linearGradient></defs><rect x="4" y="3" width="16" height="17" fill="url(#lg)" stroke="#777"/>',
  pencil: '<path d="M3 20l2-6L16 3l4 4L9 18z" fill="#e9a23b" stroke="#8a5a10"/><path d="M15 4l2-2 4 3-2 3z" fill="#f77" stroke="#b33" stroke-width=".6"/><path d="M3 20l1-3 2 2z"/>',
  brush: '<path d="M10 12L19 1l2 1-7 13z" fill="#c17d11" stroke="#6a3d05"/><path d="M9 12l4 4" stroke="#888" stroke-width="3"/><path d="M2 21q4-2 4-6 3-2 5 1 0 5-9 5z" fill="#222"/>',
  eraser: '<path d="M6 4h13l2 3-3 11-4 2H2l1-6z" fill="#f78f8f" stroke="#d33"/><path d="M7 5h12l-4 9H4z" fill="#fbb" stroke="#e66" stroke-width=".7"/>',
  airbrush: '<path d="M20 2l-9 10" stroke="#333" stroke-width="4"/><path d="M12 10l-6 7M7 9l5 4 2 6M14 14q6 5 7 0" stroke="#777" stroke-width="2" fill="none"/><path d="M2 21l4-6 1 3z" fill="#3f77d0"/>',
  ink: '<rect x="6" y="2" width="8" height="6" rx="2" fill="#444"/><path d="M4 11q6-4 12 0v8H4z" fill="#dde6f0" stroke="#345"/><rect x="5" y="13" width="10" height="5" fill="#2e62ac"/><path d="M14 16l7 5m-7 0l7-5m-3 0v5" stroke="#3465a4" stroke-width="1.200"/>',
  stamp: '<circle cx="12" cy="5.500" r="3.300" fill="#f5deaa" stroke="#8a5a10"/><path d="M10.500 9h3v4h5v6h-13v-6h5z" fill="#f0d090" stroke="#8a5a10"/><path d="M10 16h4" stroke="#333"/>',
  heal: '<g fill="#e6c800" stroke="#b09000"><rect x="1" y="8" width="22" height="7.500" rx="3" transform="rotate(45 12 12)"/><rect x="1" y="8" width="22" height="7.500" rx="3" transform="rotate(-45 12 12)"/></g>',
  pclone: '<path d="M9 8l12-2v15l-10-3z" '+B+'/><circle cx="8" cy="4.500" r="3" fill="#f5deaa" stroke="#8a5a10"/><path d="M6.500 7h3v4h4v5H2v-5h4z" fill="#f0d090" stroke="#8a5a10"/>',
  blur: '<path d="M12 3q7 9 6 13a6 5 0 01-12 0q-1-4 6-13z" fill="#a8c8ee" stroke="#5a86b8"/><path d="M9 13q-1 4 3 5" stroke="#fff" fill="none"/>',
  smudge: '<path d="M4 19l5-5-5-4 1-4 6 1 5-3 1 2 3 0 0 3-1 5-6 6z" fill="#f3c9a5" stroke="#a0522d"/><path d="M9 11l6-4M11 14l6-4M13 16l5-3" stroke="#a0522d" stroke-width=".8"/>',
  dodge: '<circle cx="9" cy="14" r="6" fill="#333"/><path d="M11 12L20 3" stroke="#444" stroke-width="3"/><circle cx="7" cy="12" r="2" fill="#777"/>'
};
const g16 = {
  edit: '<path d="M2 2.500h11v11H2z" fill="#f6f6f6" stroke="#999"/><path d="M4 5h6M4 7h5M4 9h3" stroke="#bbb"/><path d="M6 12l1-3 6-6 2 2-6 6z" fill="#8a7a40" stroke="#333" stroke-width=".7"/>',
  editc: '<path d="M2 2.500h10v12H2z" fill="#f6f6f6" stroke="#999"/><path d="M4 5h6M4 7h5" stroke="#bbb"/><path d="M5 12l1-3 7-6 2 2-7 6z" fill="#f8a030" stroke="#a50" stroke-width=".7"/><path d="M12 3l2-1 1 2-1 1z" fill="#e33"/>',
  reset: '<path d="M5 3.500h8.500v9.500H8.500M5 3.500v3" fill="none" stroke="#b89000" stroke-width="3.400"/><path d="M5 3.500h8.500v9.500H8.500M5 3.500v3" fill="none" stroke="#fce94f" stroke-width="1.700"/><path d="M1 6h7L4.500 9.500z" fill="#f2d631"/><circle cx="4" cy="13" r="2.300" fill="#5b86c0" stroke="#2d5590" stroke-width=".7"/>',
  save: '<rect x="2" y="3" width="12" height="11" fill="#4573b0" stroke="#1f3a66"/><rect x="4" y="8" width="8" height="5" fill="#eee"/><rect x="5" y="2" width="6" height="4" fill="#e33"/>',
  load: '<rect x="2" y="3" width="12" height="11" fill="#6a86a0" stroke="#333"/><rect x="4" y="3" width="8" height="5" fill="#f8d020"/><path d="M4 12l8-8" stroke="#c33" stroke-width="2"/><rect x="4" y="10" width="6" height="3" fill="#eee"/>',
  trash: '<path d="M3 4l1 10q4 2 8 0l1-10z" fill="#888" stroke="#555"/><ellipse cx="8" cy="4" rx="5.500" ry="2" fill="#aaa" stroke="#444"/><path d="M6 7v7M8 7v7M10 7v7" stroke="#444"/>',
  brushlock: '<path d="M1 4q3-4 6-2l2 5" stroke="#aaa" fill="none" stroke-width="1.500"/><path d="M8 5q7 5 4 10H8Q5 10 8 5z" fill="#b9b090" stroke="#555" stroke-dasharray="1 1"/>',
  newdoc: '<path d="M3 1.500h7l3 3v10H3z" fill="#f2f2f0" stroke="#aaa"/><path d="M10 1.500v3h3" fill="#fff" stroke="#aaa"/>',
  gup: '<path d="M8 2l5.500 6h-3v5h-5V8h-3z" fill="#8fb56c" stroke="#5c7f3d" stroke-dasharray="1 1"/>',
  gdown: '<path d="M8 14l5.500-6h-3V3h-5v5h-3z" fill="#8fb56c" stroke="#5c7f3d" stroke-dasharray="1 1"/>',
  dup: '<rect x="2" y="2" width="9" height="8" fill="#aab" stroke="#555" stroke-dasharray="1 1"/><rect x="5" y="5" width="9" height="8" fill="#7a8798" stroke="#444" stroke-dasharray="1 1"/>',
  dupc: '<rect x="5" y="5" width="10" height="9" fill="#ddd" stroke="#666"/><rect x="2" y="2" width="10" height="9" fill="#eee" stroke="#555"/><rect x="4" y="4" width="6" height="5" fill="#3465a4"/>',
  redbox: '<rect x="3" y="3" width="10" height="10" fill="#cf7878" stroke="#a55" stroke-dasharray="1 1"/>',
  redsel: '<circle cx="8" cy="8" r="4.500" fill="#cf6a6a" stroke="#a44" stroke-dasharray="1 1"/><path d="M2 5V2h3M11 2h3v3M14 11v3h-3M5 14H2v-3" fill="none" stroke="#666" stroke-width="1.200"/>',
  strokep: '<path d="M4 14q-4-6 1-10t7 1-3 7-3-3 3-4" stroke="#777" fill="none" stroke-width="1.300"/><path d="M8 11l6-9" stroke="#444" stroke-width="2"/>',
  sync: '<path d="M2 7q1-5 6-5l4 1 1-1v5H8l2-2q-4-1-5 2z" fill="#6b9ad2" stroke="#2a5a9a"/><path d="M14 9q-1 5-6 5l-4-1-1 1V9h5l-2 2q4 1 5-2z" fill="#6b9ad2" stroke="#2a5a9a"/>',
  gcal: '<rect x="1" y="0" width="14" height="3" fill="#ddd"/><rect y="2" width="16" height="14" rx="1" fill="#4a86e8"/><text x="5" y="12.500" font-size="10" font-weight="bold" fill="#fff" font-family="Open Sans">9</text>',
  page: '<path d="M3.500 1.500h5l4 4v9h-9zM8.500 1.500v4h4" fill="none" stroke="#777" stroke-width="1.400"/>',
  bb: '<rect x=".7" y="2" width="15" height="12.500" rx="1" fill="#111" stroke="#e9a13b" stroke-width="1.300"/><text x="2.500" y="12" font-size="9.500" font-weight="bold" fill="#fff" font-family="Liberation Serif">Bb</text>',
  back: '<path d="M15 8H3M8.500 2L2.500 8l6 6" fill="none" stroke="#555" stroke-width="1.900"/>',
  fwd: '<path d="M1 8h12M8 2l6 6-6 6" fill="none" stroke="#ccc" stroke-width="1.700"/>',
  reload: '<path d="M13.500 9.500a6 6 0 11-1.200-5.600" fill="none" stroke="#555" stroke-width="2"/><path d="M14.500 1v6h-6z" fill="#555"/>',
  star: '<path d="M8 1.500l2 4.600 5 .4-3.800 3.300 1.200 4.900L8 12.100l-4.400 2.600 1.200-4.900L1 6.500l5-.4z" fill="none" stroke="#555" stroke-width="1.300"/>',
  abp: '<path d="M5 0h6l5 5v6l-5 5H5l-5-5V5z" fill="#c70d0d"/><text x="1.200" y="11" font-size="7.200" font-weight="bold" fill="#fff" textLength="13.600" font-family="Roboto">ABP</text>',
  eye: '<rect width="16" height="16" fill="#fff"/><path d="M1 8q6-7 14 0-7 7-14 0M6 13L11 3" stroke="#777" fill="none"/><circle cx="8" cy="8" r="2.200" fill="none" stroke="#777"/>',
  pdf: '<rect x=".5" y=".5" width="15" height="15" fill="#2b0b0b" stroke="#d22f15"/><path d="M4 13q5-4 4-9-1-1-.5 2Q9 10 13 10q-3-1-9 3" fill="none" stroke="#fff" stroke-width="1.200"/>',
  shield: '<rect width="16" height="16" rx="2" fill="#999"/><path d="M4 4q5-2 8 0 1 8-3 9-6-2-5-9z" fill="#f2f2f2" stroke="#777"/><path d="M7 6h3l-2 4z" fill="#999"/>',
  dots: '<g fill="#555"><circle cx="8" cy="3" r="1.600"/><circle cx="8" cy="8" r="1.600"/><circle cx="8" cy="13" r="1.600"/></g>',
  theme: '<rect x="3" y="2" width="5" height="12" fill="#333"/><path d="M8 9V3l3 2z" fill="#e05f9a"/><path d="M8 12l3-8 3 3z" fill="#c9a0dc"/><path d="M8 14l6-7 2 3z" fill="#8bc34a"/><path d="M8 14h9v-4z" fill="#4bb"/>',
  power: '<path d="M5 3.500a6 6 0 106 0M8 1v7" fill="none" stroke="#ddd" stroke-width="2"/>',
  plus: '<g stroke="#903" fill="none" stroke-width="1.300"><circle cx="8" cy="8" r="6.800"/><path d="M8 4v8M4 8h8"/></g>',
  fold: '<path d="M1.500 13.500v-11h5l1 2h7v9z" fill="none" stroke="#903" stroke-width="1.400"/><path d="M1 2h6v2.500H1z" fill="#903"/>',
  refresh: '<path d="M11 13.300a6 6 0 112.800-4" fill="none" stroke="#903" stroke-width="1.300"/><path d="M11 7h5.500l-2.500 3z" fill="#903"/>',
  updown: '<path d="M5.500 14V2M3 4.500L5.500 2 8 4.500M10.500 3v11M8 11.500l2.500 2.500 2.500-2.500" fill="none" stroke="#903" stroke-width="1.300"/>',
  cut: '<path d="M4 1l6 9M12 1L6 10" stroke="#555" stroke-width="2"/><g '+G+'><circle cx="4" cy="12" r="2.300"/><circle cx="12" cy="12" r="2.300"/></g>',
  copy: '<path d="M4 2h5l3 3v9H4zM9 2v3h3" '+G+'/>',
  paste: '<path d="M3.500 3h9v11h-9z" '+G+'/><rect x="5.500" y="1" width="5" height="3" fill="#555"/><path d="M8 14l4-5v5z" fill="#555"/>',
  find: '<circle cx="8" cy="7" r="4.500" fill="none" stroke="#555" stroke-width="2.200"/><path d="M9 9l4 5" stroke="#555" stroke-width="2.500"/>',
  undoarr: '<path d="M3 8q6-7 10 0 0 3-2 5" fill="none" stroke="#bbb" stroke-width="2.500"/><path d="M1 4v7h6z" fill="#bbb"/>',
  redoarr: '<path d="M13 8Q7 1 3 8q0 3 2 5" fill="none" stroke="#bbb" stroke-width="2.500"/><path d="M15 4v7H9z" fill="#bbb"/>',
  al: '<path d="M1 2h14M1 6h9M1 10h14M1 14h10" stroke="#555" stroke-width="1.800"/>',
  ac: '<path d="M1 2h14M3 6h10M1 10h14M3 14h10" stroke="#555" stroke-width="1.800"/>',
  ar: '<path d="M1 2h14M6 6h9M1 10h14M5 14h10" stroke="#555" stroke-width="1.800"/>',
  aj: '<path d="M1 2h14M1 6h14M1 10h14M1 14h14" stroke="#555" stroke-width="1.800"/>',
  ind: '<path d="M1 1v5l4-2.500z" fill="#555"/><path d="M7 2h8M7 6h8M1 10h14M3 14h12" stroke="#555" stroke-width="1.800"/>',
  outd: '<path d="M5 1v5L1 3.500z" fill="#bbb"/><path d="M7 2h8M7 6h8M1 10h14M3 14h12" stroke="#bbb" stroke-width="1.800"/>',
  ul: '<path d="M5 3h10M5 8h10M5 13h10" stroke="#555" stroke-width="2"/><path d="M1 3h2M1 8h2M1 13h2" stroke="#555" stroke-width="2"/>',
  ol: '<path d="M6 3h9M6 8h9M6 13h9" stroke="#555" stroke-width="2"/><path d="M2 1v3M1 7h2v2M1 12h2v2H1" stroke="#555" fill="none"/>',
  lnk: '<path d="M6 10l5-5M5 7L3 9q-2 3 1 4 2 1 3-1l2-2M11 8l2-2q2-3-1-4-2-1-3 1L7 5" fill="none" stroke="#bbb" stroke-width="1.600"/>',
  unl: '<path d="M5 7L3 9q-2 3 1 4 2 1 3-1M11 8l2-1q3-3 0-4-2-1-3 1M3 2l2 3M12 12l2 2M7 1v3" fill="none" stroke="#bbb" stroke-width="1.500"/>',
  hr1: '<path d="M1 8h14" stroke="#555"/>', hr2: '<path d="M1 8h14" stroke="#555" stroke-width="2.500"/>', nb: '<path d="M2 9v4h12V9" stroke="#555" fill="none" stroke-width="1.300"/>',
  spell: '<text x="1" y="5" font-size="6" font-family="DejaVu Sans Mono" font-weight="normal" fill="#444">ABC</text><path d="M3 10l4 4 6-8" stroke="#444" stroke-width="2.600" fill="none"/>',
  clip: '<path d="M4 11l6-7q3-2 4 1l-7 9q-3 2-5-1l7-9M5 12l7-8" fill="none" stroke="#555" stroke-width="1.500"/>',
  img: '<rect x="1" y="2" width="14" height="12" fill="none" stroke="#555" stroke-width="1.300"/><path d="M3 12l3-4 3 2 4-4v6z" fill="#555"/><circle cx="5" cy="5" r="1.300" fill="#555"/>',
  vid: '<rect x="1" y="2" width="14" height="12" fill="none" stroke="#555" stroke-width="1.300"/><path d="M3.500 2v12M12.500 2v12" stroke="#555" stroke-width="1.500" stroke-dasharray="1.500 1"/><path d="M6 5v6l4-3z" fill="#555"/>',
  smile: '<circle cx="8" cy="8" r="6.800" fill="none" stroke="#555" stroke-width="1.200"/><circle cx="5.500" cy="6" r="1.100" fill="#555"/><circle cx="10.500" cy="6" r="1.100" fill="#555"/><path d="M4 9q4 5 8 0" stroke="#555" fill="none" stroke-width="1.200"/>',
  anchor: '<circle cx="8" cy="3" r="1.800" '+G+'/><path d="M8 5v9M5 7h6M1 9q1 5 7 6 6-1 7-6" '+G+'/>',
  grid: '<path d="M2 2h12v12H2zM6 2v12M10 2v12M2 6h12M2 10h12" fill="none" stroke="#555" stroke-width="1.200"/>',
  gr1: '<path d="M2 3h12v11H2zM6 3v11M10 3v11" fill="none" stroke="#bbb"/><path d="M2 6h12v4H2z" fill="#bbb"/>',
  gr2: '<path d="M2 3h12v11H2zM6 3v11M10 3v11M2 6h12M2 10h12" fill="none" stroke="#bbb"/><path d="M6 6h4v4H6z" fill="#bbb"/>',
  gr3: '<path d="M2 2h12v12H2zM6 2v12M10 2v12M2 6h12M2 10h12" fill="none" stroke="#bbb"/><path d="M5 2h6v5H5z" fill="#bbb"/>',
  gr4: '<path d="M2 2h12v12H2zM6 2v12M10 2v12M2 6h12M2 10h12" fill="none" stroke="#bbb"/><path d="M5 9h6v6H5z" fill="#bbb"/>',
  gr5: '<path d="M2 2h12v12H2zM6 2v12M10 2v12M2 6h12M2 10h12" fill="none" stroke="#bbb"/><path d="M2 5h5v6H2z" fill="#bbb"/>',
  gr6: '<path d="M2 2h12v12H2zM6 2v12M10 2v12M2 6h12M2 10h12" fill="none" stroke="#bbb"/><path d="M9 5h5v6H9z" fill="#bbb"/>',
  gr7: '<path d="M2 2h12v12H2zM2 6h12M2 10h12" fill="none" stroke="#bbb"/><path d="M6 2h4v12H6z" fill="#aaa"/>',
  box: '<rect x="2" y="2" width="12" height="12" fill="none" stroke="#bbb"/>',
  marker: '<path d="M2 13l3-7 8-5 3 4-7 7z" fill="#555"/><path d="M1 15l4-1-2-3z" fill="#555"/>',
  monitor: '<rect x="1.500" y="1.500" width="13" height="10" '+G+'/><path d="M5 14h6M9 8l4 5" stroke="#555" stroke-width="2"/>',
  full: '<path d="M1 1h5L4.500 3 7 6 6 7 3 4.500 1 6zM15 1h-5l1.500 2L9 6l1 1 3-2.500L15 6zM1 15h5l-1.500-2L7 10 6 9l-3 2.500L1 10zM15 15h-5l1.500-2L9 10l1-1 3 2.500 2-1.500z" fill="#555"/>',
  ups: '<path d="M2 8l6-5 6 5M2 14l6-5 6 5" fill="none" stroke="#555" stroke-width="2"/>'
};
const other = {
  appthumb: ['0 0 16 14', '<rect width="16" height="14" fill="#f4f4f4"/><path d="M0 1h14v1H0zM0 3h4v11H0z" fill="#444"/><path d="M6 5h8M6 8h8" stroke="#ddd"/>'],
  winbtns: ['0 0 102 12', '<path d="M1 6.500h10" stroke="#000"/><rect x="46.500" y="1.500" width="9" height="9" fill="none" stroke="#000"/><path d="M91 1l10 10M101 1L91 11" stroke="#000"/>'],
  chromebtns: ['0 0 102 11', '<path d="M0 5.500h10" stroke="#000"/><rect x="45.500" y=".5" width="9" height="9" fill="none" stroke="#000"/><path d="M91 0l10 10M101 0L91 10" stroke="#000"/>'],
  wilber: ['0 0 164 26', '<path d="M0 26Q0 6 24 4q16 3 19 22zM37 0h127l-4 26H43Q44 10 37 0z" fill="#d9d9d9"/><g fill="#efefef"><ellipse cx="14" cy="20" rx="8" ry="10"/><path d="M40 0h32q-4 10 0 26h-16Q42 22 42 8z"/><path d="M75 0h35q8 12-3 26H78Q68 12 75 0z"/></g><g fill="#d9d9d9"><circle cx="14" cy="22" r="5"/><circle cx="59" cy="14" r="7"/><ellipse cx="97" cy="16" rx="10" ry="11"/></g>'],
  colors: ['0 0 60 48', '<rect x="18.500" y="18.500" width="37" height="27" fill="#fff" stroke="#000"/><path d="M18 46V18h38" stroke="#ddd" fill="none"/><rect x="2" y="4" width="38" height="28" fill="#efefef"/><rect x="3" y="4.500" width="35" height="26" fill="#000" stroke="#777"/><path d="M45 9l4-4v2q7 0 7 6h2l-3 4-4-4h2q0-3-4-3v3z" fill="#fff" stroke="#999"/><rect x="6.500" y="38.500" width="6" height="6" fill="#fff" stroke="#888"/><rect x="2" y="34" width="7" height="7"/>'],
  toolopt: ['0 0 18 20', '<rect x=".5" y="1.500" width="17" height="16" fill="#f4f4f4" stroke="#999"/><path d="M4 5h4v5H4zM6 10v4M12 4v3" fill="#fff" stroke="#555"/><rect x="10.500" y="7.500" width="4" height="6" rx="2" fill="#fff" stroke="#555"/>'],
  menubtn: ['0 0 12 12', '<rect x=".5" y=".5" width="11" height="11" rx="2" fill="none" stroke="#777" stroke-width="1.200"/><path d="M8 3v6L4 6z" fill="#555"/>'],
  playbtn: ['0 0 14 13', '<rect x=".5" y=".5" width="11" height="11" rx="2" fill="#eee" stroke="#777"/><path d="M4 3v6l4-3z" fill="#777"/>'],
  zoomfit: ['0 0 13 13', '<rect x=".5" y=".5" width="11" height="11" fill="none" stroke="#3465a4" stroke-dasharray="1 1"/><circle cx="6" cy="5.500" r="3" fill="none" stroke="#666"/><path d="M8 8l3 3" stroke="#666" stroke-width="1.500"/>'],
  quick: ['0 0 14 12', '<rect x="1" y="0" width="10" height="10" fill="none" stroke="#777" stroke-dasharray="3 2"/>'],
  nav: ['1 1 21 21', t24.move],
  chev: ['0 0 9 9', '<path d="M.8 2.500l3.700 3.700 3.700-3.700" fill="none" stroke="#444"/>'],
  spin: ['0 0 9 26', '<path d="M.5 0v26M0 13h9" stroke="#bbb"/><path d="M2 8.500h6L5 5zM2 18h6l-3 3.500z"/>'],
  plusbox: ['0 0 9 9', '<rect x=".5" y=".5" width="8" height="8" fill="#fff" stroke="#999"/><path d="M2 4.500h5M4.500 2v5" stroke="#346"/>'],
  softbtn: ['0 0 24 24', '<rect width="24" height="24" fill="#fff"/><circle cx="12" cy="12" r="9" fill="url(#soft)"/><path d="M24 17v7h-6z" fill="#88f"/><path d="M18 20h5M20.500 17.500v5" stroke="#000"/>'],
  dyn: ['0 0 24 24', '<g fill="#e07020" stroke="#a04000" stroke-width=".6"><circle cx="3.500" cy="4" r="2.200"/><circle cx="9" cy="4" r="2.200"/><circle cx="3.500" cy="10" r="2.200"/></g><path d="M7 20q0-9 4-11 4-3 8 2h2v12H9q4-3-2-3z" '+B+'/>'],
  layers: ['0 0 24 24', '<g fill="#eee" stroke="#777"><path d="M1 22l4-9h18l-4 9z"/><path d="M1 18l4-9h18l-4 9z"/><path d="M1 14l4-9h18l-4 9z"/></g>'],
  channels: ['0 0 24 24', '<path d="M1 23l4-9h18l-4 9z" fill="#3465a4" stroke="#1f4a80"/><path d="M1 19l4-9h18l-4 9z" fill="#4e9a06" stroke="#2e6a00"/><path d="M1 14L5 2h18l-4 12z" fill="#e11b1b" stroke="#900"/>'],
  pathsdock: ['0 0 24 24', '<path d="M2 22Q5 6 10 7t4 7 8-11M4 21q8 2 6-6t9 8" fill="none" stroke="#5b86c0" stroke-width="1.300"/><path d="M1 12l11-10M10 14l12-5M8 21l8-6M10 15l8 7" stroke="#222" stroke-width=".9"/><g fill="#fff" stroke="#000"><rect x="6" y="6" width="2" height="2"/><rect x="15" y="11" width="2" height="2"/><rect x="11" y="17" width="2" height="2"/></g>'],
  undodock: ['0 0 24 24', '<path d="M13 2L4 9l9 7v-4q7 0 3 10 10-8 4-14-3-3-7-3z" fill="#fbe98a" stroke="#d8b830"/><path d="M9 2L1 9l8 7v-4q8 0 3 10 9-8 4-13-3-3-7-3z" fill="#f3d020" stroke="#b89000"/>'],
  histo: ['0 0 24 24', '<rect x="1" y="2" width="22" height="20" fill="#fff" stroke="#777"/><path d="M4 15V9l1 2 1-4 1 4 1-3 1 3 1-5 1 5 1-4 1 3 1-4 1 5 1-4 1 3 1-5 2 4v6z" fill="#3465a4"/><path d="M4 18.500h16" stroke="#aaa"/>'],
  tbrush: ['0 0 22 22', '<rect x=".5" y=".5" width="21" height="21" fill="#fff" stroke="#000"/><circle cx="11" cy="11" r="7" fill="url(#soft)"/><path d="M22 17v5h-5z" fill="#88f"/><path d="M16 19h5M18.500 16.500v5" stroke="#000"/>'],
  tpattern: ['0 0 22 22', '<rect x=".5" y=".5" width="21" height="21" fill="#fdbf4d" stroke="#000"/><path d="M4 1q2 10 0 20M8 1v20M12 1q-2 10 0 20M17 1v20" stroke="#e8902a" fill="none"/>'],
  tgradient: ['0 0 22 22', '<defs><linearGradient id="tg"><stop stop-color="#000"/><stop offset="1" stop-color="#fff"/></linearGradient></defs><rect x=".5" y=".5" width="21" height="21" fill="url(#tg)" stroke="#000"/>'],
  aup: ['0 0 15 17', '<path d="M4 10l3.500-4L11 10" fill="none" stroke="#555" stroke-width="1.800"/>'],
  adown: ['0 0 15 17', '<path d="M4 7l3.500 4L11 7" fill="none" stroke="#555" stroke-width="1.800"/>'],
  aupl: ['0 0 15 17', '<path d="M4 10.500l3.500-4 3.500 4" fill="none" stroke="#bbb" stroke-width="1.800"/>'],
  adownl: ['0 0 15 17', '<path d="M4 7l3.500 4L11 7" fill="none" stroke="#bbb" stroke-width="1.800"/>'],
  aleft: ['0 0 17 15', '<path d="M10 4L6 7.500l4 3.500" fill="none" stroke="#555" stroke-width="1.800"/>'],
  aright: ['0 0 17 15', '<path d="M7 4l4 3.500L7 11" fill="none" stroke="#555" stroke-width="1.800"/>'],
  sbup: ['0 0 15 17', '<path d="M4.500 10.500h7L8 7z" fill="#999"/>'],
  sbdown: ['0 0 15 17', '<path d="M4.500 7h8l-4 4z" fill="#444"/>'],
  x: ['0 0 9 9', '<path d="M1 1l7 7M8 1L1 8" stroke="#555" stroke-width="1.600"/>'],
  lock: ['0 0 9 12', '<rect y="5" width="9" height="7" fill="#0b8043"/><path d="M2 6V3q2.500-4 5 0v3" fill="none" stroke="#0b8043" stroke-width="1.500"/>'],
  apps: ['0 0 14 14', '<g fill="#e33"><path d="M0 0h3v3H0zM5 0h3v3H5zM10 0h3v3h-3z"/></g><path d="M0 5h3v3H0z" fill="#0a8a4a"/><path d="M5 5h3v3H5z" fill="#4285f4"/><path d="M10 5h3v3h-3zM10 10h3v3h-3zM5 10h3v3H5z" fill="#f4a81d"/><path d="M0 10h3v3H0z" fill="#0a8a4a"/>'],
  folder: ['0 0 14 14', '<path d="M1 .5h11v13H1z" fill="#fee79a" stroke="#f0cf60"/><path d="M9.500 9.500h2.500v4H9.500z" fill="#fee79a" stroke="#e8bf40"/>'],
  person: ['0 0 14 14', '<circle cx="7" cy="4.500" r="4" fill="#ccc"/><path d="M0 14q0-5 7-5t7 5z" fill="#ccc"/>'],
  link: ['0 0 14 14', '<g fill="none" stroke="#fff" stroke-width="1.400"><rect x="6.500" y="1" width="4" height="7" rx="2" transform="rotate(35 8 5)"/><rect x="3" y="6" width="4" height="7" rx="2" transform="rotate(35 5 9)"/></g>'],
  down: ['0 0 14 14', '<circle cx="7" cy="7" r="7" fill="#c8c8c8"/><path d="M4 5.500l3 3 3-3" fill="none" stroke="#fff" stroke-width="1.800"/>'],
  preview: ['0 0 24 18', '<g fill="none" stroke="#a0a0a0" stroke-width="2.200"><path d="M3 6q8-8 18 0M21 12q-8 8-18 0"/></g><circle cx="12" cy="9" r="3.600" fill="#a0a0a0"/><path d="M1 1v6h6zM23 17v-6h-6z" fill="#a0a0a0"/>'],
  dotbox: ['0 0 11 11', '<rect width="11" height="11" rx="1.500" fill="#ccc"/><rect x="2.500" y="2.500" width="6" height="6" fill="none" stroke="#555" stroke-dasharray="1 1"/>'],
  swatch: ['0 0 43 23', '<rect width="43" height="23" fill="#ddd"/><rect x="2.500" y="2.500" width="17" height="17" fill="#000" stroke="#999"/><circle cx="31" cy="11" r="8" fill="#c4c4c4"/><path d="M27 9l4 4.500L35 9" stroke="#fff" stroke-width="2" fill="none"/>'],
  grip: ['0 0 14 14', '<path d="M2 14L13 3M6 14l7-7M10 14l3-3" stroke="#555" stroke-width="1.200"/>'],
  mash: ['0 0 10 10', '<circle cx="5" cy="1.700" r="1.700" fill="#d70"/><circle cx="1.700" cy="5" r="1.700" fill="#2a7"/><circle cx="8.300" cy="5" r="1.700" fill="#333"/><circle cx="5" cy="8.300" r="1.700" fill="#15a"/>'],
  close: ['0 0 12 12', '<rect x=".6" y=".6" width="10.800" height="10.800" rx="2" fill="#f4f4f4" stroke="#777" stroke-width="1.200"/><path d="M3.500 3.500l5 5M8.500 3.500l-5 5" stroke="#666" stroke-width="1.800"/>'],
  tabshapes: ['0 0 1155 47', '<g stroke="#bdbdbd" stroke-width="1.200"><path d="M206 47l7-25q1-2 3-2h174q3 0 4 2l10 25z" fill="#d8d8d8"/><path d="M6 47l12-25q1-2 3-2h174q3 0 4 2l12 25z" fill="#d8d8d8"/><path d="M393 48l12-26q1-2 3-2h174q3 0 4 2l12 26z" fill="#f1f1f1"/><path d="M596 27h25q2 0 3 2l6 14h-25q-2 0-3-2z" fill="#d8d8d8"/></g>']
};
other.dynbtn = other.dyn;

const wrap = (vb, body) => `<svg viewBox="${vb}">${body}</svg>`;
function icon(n) {
  if (other[n]) return wrap(...other[n]);
  if (g16[n]) return wrap('0 0 16 16', g16[n]);
  return wrap('0 0 24 24', t24[n] || '');
}
document.body.insertAdjacentHTML('beforeend', '<svg style="position:absolute;width:0;height:0"><defs><radialGradient id="soft"><stop stop-color="#000"/><stop offset=".3" stop-color="#222"/><stop offset=".65" stop-color="#888" stop-opacity=".6"/><stop offset="1" stop-color="#fff" stop-opacity="0"/></radialGradient><radialGradient id="hard"><stop stop-color="#000"/><stop offset=".65" stop-color="#000"/><stop offset="1" stop-color="#000" stop-opacity="0"/></radialGradient><radialGradient id="sun"><stop stop-color="#fff27a"/><stop offset=".35" stop-color="#ffe030"/><stop offset=".65" stop-color="#f9a060" stop-opacity=".7"/><stop offset="1" stop-color="#f88" stop-opacity="0"/></radialGradient></defs></svg>');
document.querySelectorAll('[data-icon]').forEach(el => { el.innerHTML = icon(el.dataset.icon); });

// Editor button bars: "~" small drop arrow, "'" literal glyph, otherwise an icon name
const sel = t => `<div class="sel">${t}<small>▼</small></div>`;
const btn = t => t === '~' ? '<i class="n">▼</i>' : t[0] === '<' ? t : t[0] === "'" ? `<i><span>${t.slice(1)}</span></i>` : `<i>${icon(t)}</i>`;
const grp = (...a) => `<div class="grp">${a.map(btn).join('')}</div>`;
document.getElementById('bars').innerHTML = [
  [grp("'T", "'<em>T</em>", "'<u>T</u>", "'<s>T</s>"), sel('Paragraph'), sel('Arial'), sel('3 (12pt)'), grp('ul', '~'), grp('ol', '~'), grp('<i class="lt">T</i>', '~'), grp('marker', 'monitor', "'<em>i</em>", 'full', 'ups')],
  [grp('cut', 'copy', 'paste', 'find'), grp('undoarr', 'redoarr'), grp('al', 'ac', 'ar', 'aj'), grp('ind', 'outd'), grp("'T<sup>x</sup>", "'T<sub>x</sub>"), grp('lnk', 'unl'), grp("'<span class='tiny'>▸</span><span class='sans'>¶</span>", "'<span class='sans'>¶</span><span class='tiny'>◂</span>"), grp('hr1', 'hr2', 'nb'), grp(`<i class="k">${icon('spell')}</i>`, '~')],
  [grp('clip', 'img', 'vid', "'<em>f<sub>x</sub></em>"), grp(`<i class="m">${icon('mash')}Mashups</i>`, '~'), grp("'<span class='sans'>¶</span>", '<i class="quote">“</i>', "'<span class='sans'>©</span>", 'smile', 'anchor'), grp('grid', 'gr1', 'gr2', 'gr3', 'gr4', 'gr1', 'gr5', 'gr6', 'gr7', 'box', 'box'), grp('<i class="h">HTML</i>', '<i class="h">CSS</i>')]
].map(r => `<div class="bar">${r.join('')}</div>`).join('');

// Rulers
const svgText = (x, y, s, f = 10) => `<text x="${x}" y="${y}" font-size="${f}" letter-spacing="-.5">${s}</text>`;
let h = '', hl = '';
for (let v = -60; v <= 1210; v += 10) {
  const x = v + 62.5, len = v % 100 === 0 ? 12 : v % 20 === 0 ? 5 : 3;
  h += `M${x} 14v-${len}`;
  if (v % 100 === 0) hl += svgText(x + 1.5, 11, v === 1200 ? '120' : v);
}
document.getElementById('hruler').innerHTML = `<svg viewBox="0 0 1280 15"><path d="${h}M2 14.500h1277" stroke="#000"/>${hl}<path d="M1266 10h8l-4 5z"/></svg>`;
let vt = '', vl = '';
for (let v = -220; v <= 1190; v += 10) {
  const y = v + 221.5, len = v % 100 === 0 ? 12 : v % 20 === 0 ? 5 : 3;
  vt += `M14 ${y}h-${len}`;
  if (v % 100 === 0) [...String(v)].forEach((c, i) => vl += svgText(c === '-' ? 3 : 2, y + 9.5 + i * 9, c, 9.5));
}
document.getElementById('vruler').innerHTML = `<svg viewBox="0 0 16 1412"><path d="${vt}M14.500 0v1410" stroke="#000"/>${vl}<path d="M9 789v8l5-4z"/></svg>`;

// Open image tabs
function thumb(k) {
  let s = '<rect width="46" height="40" fill="#fff"/>';
  const cal = c => { for (let y = 0; y < 4; y++) for (let x = 0; x < 2; x++) s += `<rect x="${21 + x * 9}" y="${16 + y * 6.5}" width="5" height="3" fill="${c}"/>`; };
  const lines = (x0, n, c) => { for (let i = 0; i < n; i++) s += `<rect x="${x0}" y="${8 + i * 4}" width="${8 + (i * 7) % 22}" height="1" fill="${c}"/>`; };
  if (k === 0) s += '<rect x="15" y="13" width="5" height="9" fill="#f2f2f5"/><path d="M3 11h4" stroke="#999"/>';
  if (k === 1) s += '<path d="M10 5v35M20 8v32M29 8v32M38 8v32M10 16h36M10 24h36M10 32h36" stroke="#f2f2f2"/><rect x="20" y="16" width="3" height="2" fill="#acf"/><path d="M1 26h4M1 30h5M9 23h8" stroke="#ccc"/><circle cx="43" cy="38" r="1.500" fill="#d44"/>';
  if (k === 2) { s += '<rect width="46" height="40" fill="#f0f0f0"/><rect x="17" y="11" width="27" height="15" fill="#fff"/><path d="M0 0h46v6H0z" fill="#fbfbfb"/><path d="M20 13h10M20 16h14M20 21h12" stroke="#d5dae5"/><path d="M1 10h9M1 14h6M1 24h9M1 28h8M1 34h9" stroke="#ddd"/>'; }
  if (k === 3) { s += '<rect y="6" width="46" height="34" fill="#8b8b8b"/>'; cal('#2d3d80'); s += '<rect x="6" y="23" width="20" height="15" fill="#fff"/><rect x="8" y="26" width="4" height="2" fill="#48f"/><rect x="20" y="35" width="5" height="2" fill="#48f"/>'; }
  if (k === 4 || k === 5) { lines(2, 2, '#eee'); s += '<path d="M1 26h6M1 31h5M1 35h6" stroke="#ddd"/>'; cal('#6570c0'); s += '<circle cx="44" cy="38" r="1.500" fill="#d44"/>'; if (k === 5) s += '<path d="M10 34h6v4h-6z" fill="#d99"/>'; }
  if (k === 6 || k === 7) { s += '<rect y="5" width="17" height="35" fill="#f0f0f0"/>'; for (let i = 0; i < 8; i++) s += `<path d="M1 ${9 + i * 4}h${6 + i * 3 % 7}" stroke="#ccc"/><path d="M19 ${9 + i * 4}h${10 + i * 7 % 16}" stroke="#ddd"/>`; }
  if (k === 8) { s += '<rect x="12" y="8" width="30" height="3" fill="#4a9bf5"/>'; cal('#6f86d0'); s += '<path d="M2 30h6v2H2zM2 36h6v2H2z" fill="#e8a040"/><path d="M2 33h6v2H2z" fill="#5a5"/><path d="M11 38h34M12 9h29" stroke="#48f"/>'; }
  if (k === 9 || k === 11) s += '<path d="M0 5h46v1.500H0zM0 9h8v31H0z" fill="#333"/><path d="M0 4h6" stroke="#a24"/><path d="M1 10h7" stroke="#fc3"/><path d="M10 18h9" stroke="#bbb"/>' + (k === 9 ? '<path d="M9 15h33" stroke="#c24"/><path d="M43 15h3" stroke="#fc3"/>' : '<path d="M10 12h22M10 22h28M12 25h24M12 27h22" stroke="#ccc"/><path d="M39 38.500h4" stroke="#a03"/>');
  if (k === 10) s += '<rect x="5" y="2" width="32" height="38" fill="#eee"/><rect x="6" y="10" width="30" height="24" fill="#fff"/><path d="M6 13h30v1H6zM6 16h5v17H6z" fill="#333"/><path d="M12 19h20" stroke="#c24"/><path d="M0 4h4M0 8h4" stroke="#88a"/>';
  s += '<path d="M1 1.500h22M38 1.500h6" stroke="#ccc"/>';
  return wrap('0 0 46 40', s);
}
document.getElementById('imgTabs').innerHTML = Array.from({ length: 12 }, (_, k) => `<div class="img-tab${k === 11 ? ' on' : ''}"><i class="th">${thumb(k)}</i><i class="cl">${icon('close')}</i></div>`).join('');

// Brush list: scattered dabs from a seeded generator
let seed = 7;
const rnd = () => (seed = (seed * 16807) % 2147483647) / 2147483647;
function scatter(n, rx, ry, size, col = '#000', edge = .6, cx = 16, cy = 16) {
  let d = '';
  for (let i = 0; i < n; i++) {
    const a = rnd() * 6.283, r = Math.pow(rnd(), edge) * (.75 + .4 * rnd()), s = size * (.4 + rnd() * .9);
    d += `M${(cx + Math.cos(a) * r * rx).toFixed(1)} ${(cy + Math.sin(a) * r * ry).toFixed(1)}h${s.toFixed(1)}v${s.toFixed(1)}h-${s.toFixed(1)}z`;
  }
  return `<path d="${d}" fill="${col}"/>`;
}
const ring = (n, c) => scatter(n, 15, 14, 1.2, c || '#222', .5);
const brushes = [
  ['', ''], ['<rect x="14" y="15" width="3" height="3" fill="#666"/>', 'b-'], ['<rect x="2" y="12" width="29" height="7"/>', 'b'], ['<ellipse cx="16" cy="15.500" rx="13" ry="5.500" fill="url(#hard)"/>', 'b'], ['<path d="M1 15.500h30" stroke="#000"/>', 'b'], ['<circle cx="16" cy="16.500" r="12" fill="url(#soft)" opacity=".75"/>', 'b'], ['<circle cx="16" cy="16.500" r="14" fill="url(#soft)"/>', 'b*'], ['<circle cx="16" cy="16.500" r="14.500" fill="url(#hard)"/>', 'b'],
  ['<circle cx="16" cy="16.500" r="15.500"/>', 'b'], ['<path d="M16 2l3.500 9.500H30l-8.300 6.200L24.500 28 16 22l-8.500 6 2.800-10.300L2 11.500h10.500z"/>', 'b'], [scatter(520, 11, 10, 1.3, '#000', .9), 'r'], [scatter(150, 12, 8, 1.3), 'r'], [scatter(210, 8, 12, 1.2, '#222'), 'r'], [scatter(400, 11, 11, 1.2, '#555', .9), 'r'], [scatter(480, 13, 13, 1.3, '#000', .8), 'r'], ['<path d="M6 3l4 8" stroke="#999" stroke-width="1.500"/>', 'r-'],
  [scatter(9, 13, 13, 2, '#555'), ''], [scatter(26, 14, 13, 2.2), ''], [scatter(24, 15, 14, 1), '.'], [ring(270), ''], [ring(360, '#111'), ''], [scatter(360, 14, 14, 1.2), 'r'], [ring(380), 'r'], ['<circle cx="16" cy="16" r="13.500" fill="#777"/>' + scatter(220, 12, 11, 1.9, '#111', .7, 16, 14), 'r'],
  [scatter(190, 14, 8, 1.6), ''], [scatter(230, 13, 9, 1.1, '#444'), ''], ['<path d="M5 3l3 6M12 10l6-3M22 8l6-3M4 17l8-2M19 18l4 6M24 16l7 2M8 28l5-8M16 26h5M19 10l-2 5" stroke="#999" stroke-width="1.500"/>', '.'], [scatter(80, 14, 13, 2, '#555'), ''], [scatter(520, 15, 14, 1.3, '#333', .45), ''], [scatter(190, 15, 14, 1.1, '#222', .5), 'r'], [scatter(270, 12, 13, 1.5, '#333', .4), ''], [scatter(60, 10, 7, 2, '#555', .8, 13, 9) + scatter(60, 14, 14, 1, '#888'), ''],
  [scatter(110, 12, 13, 1, '#444', .4), ''], [scatter(100, 3, 10, 1.3, '#777'), 'r'], [scatter(30, 2, 9, 1.6), 'r'], ['<path d="M2 9l19 17M5 7l19 17M9 5l18 16M13 4l17 15M2 13l14 13" stroke="#000"/>', ''], ['<circle cx="16" cy="16" r=".7"/>', '.'], ['<path d="M2 4l10 2 8-3 10 2M1 15q10-4 16-1M20 12l11-4M3 20l12 8M14 20l16-4" stroke="#999" stroke-width="3.500" fill="none"/>', ''], [scatter(520, 13, 13, 1.4, '#888'), ''], ['<circle cx="16" cy="16.500" r="14" fill="url(#sun)"/>', 'r'],
  [scatter(24, 13, 13, 1.9), 'r'], [scatter(60, 13, 11, 1.6), 'r'], [scatter(230, 15, 15, 1, '#333', .5), ''], [scatter(400, 14, 14, 1.1, '#333', .7), 'r'], ['<path d="M2 13q12-9 24 0-12-3-24 0M4 15h22M3 17.500h19M6 11h18M14 19l13 2M24 22l4 5" stroke="#111" stroke-width="1.500" fill="none"/>', ''], [scatter(400, 12, 12, 1.3, '#333', .9), ''], [scatter(180, 10, 11, 1.5, '#222', .35), ''], ['<path d="M6 5l5 5-3 6-3 12M11 3l2 25M18 3l2 14 7 11M27 5l-5 8-4-2M2 14h9l3 8" stroke="#000" stroke-width="2" fill="none" stroke-dasharray="5 1"/>' + scatter(60, 13, 13, 1.4), 'r'],
  [scatter(80, 11, 13, 1, '#777'), 'r'], [scatter(520, 13, 12, 1.3, '#555', .6), 'r'], ['<path d="M16 2v28M3 16h26M6 5l20 22M26 5L6 27M11 3l10 27M2 11l28 11" stroke="#444" stroke-width="1.500" stroke-dasharray="4 2"/>' + scatter(80, 6, 6, 1.3, '#333'), ''], [scatter(340, 13, 11, 1.2, '#444', .5), 'r'], ['<path d="M3 10l6 2-1 5-4-3zM11 15l5-1 1 3-4 1zM19 17l4 1-1 4-3-1zM23 22l5 0-1 4zM9 8l5 0-2 4z" fill="#3f9a3a"/>', 'r'], ['<path d="M5 6q5-4 10-1 7-3 11 1 5 7 1 15-3 9-10 7-8 2-11-5-4-9-1-17z" fill="#5fb052"/><path d="M15 5V0M10 10q-2 8 0 16M22 9q3 9-1 16" stroke="#2d7a2a" stroke-width="1.500" fill="none"/><path d="M5 19q2 7 5 8l2-6zM12 26h6l-2 3h-3z" fill="#b5503a"/>', '']
];
document.getElementById('bgrid').innerHTML = brushes.map(([b, f], i) => {
  const col = f.includes('b') ? '#8a9cf8' : f.includes('r') ? '#f58a8a' : '';
  const tri = col ? `<path d="M32 28v5h-5z" fill="${col}"/>` : '';
  const plus = i && !f.includes('-') && !f.includes('.') ? '<path d="M26.500 30.500h5M29 28v5" stroke="#000" stroke-width="1.200"/>' : '';
  return `<i class="${f.includes('*') ? 'on' : ''}"><svg viewBox="-1 -1 34 34">${b}${tri}${plus}</svg></i>`;
}).join('');
```
